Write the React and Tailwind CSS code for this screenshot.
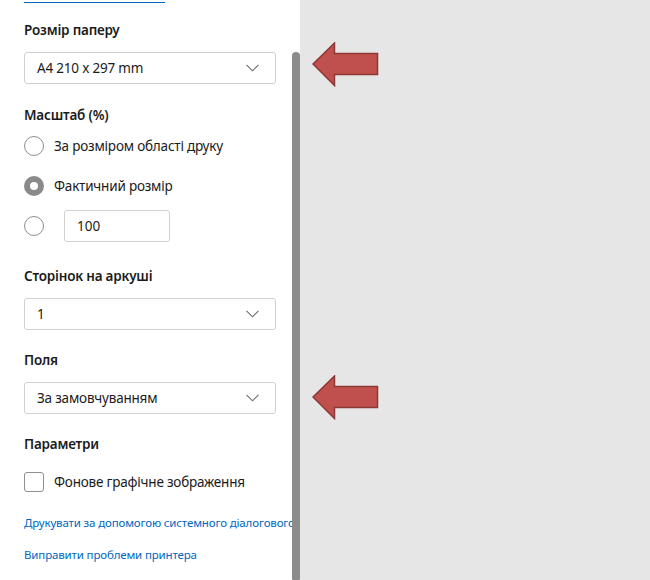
import React from 'react';

const font = { fontFamily: '"Segoe UI", "Noto Sans", "Open Sans", sans-serif' };

const Chevron = () => (
  <svg width="13" height="8" viewBox="0 0 13 8" className="shrink-0">
    <polyline points="0.5,0.8 6.5,6.8 12.5,0.8" fill="none" stroke="#6b6b6b" strokeWidth="1.1" />
  </svg>
);

const Select = ({ value, className = '' }) => (
  <div className={`w-[252px] h-8 flex items-center justify-between pl-3 pr-4 border border-[#d1d1d1] rounded-[3px] bg-white text-[13.5px] tracking-[-0.2px] text-[#1b1b1b] ${className}`}>
    <span>{value}</span>
    <Chevron />
  </div>
);

const Label = ({ children, className = '' }) => (
  <div className={`h-5 leading-5 text-[13.5px] tracking-[-0.2px] font-semibold text-[#1b1b1b] ${className}`}>{children}</div>
);

const Radio = ({ checked }) => (
  checked ? (
    <div className="w-5 h-5 rounded-full border-[6px] border-[#8a8a8a] bg-white shrink-0" />
  ) : (
    <div className="w-5 h-5 rounded-full border border-[#8f8f8f] bg-white shrink-0" />
  )
);

const Arrow = ({ className }) => (
  <svg width="67" height="45" viewBox="0 0 67 45" className={`absolute ${className}`}>
    <path
      d="M1 22 L22.5 1 L22.5 11.5 L65.5 11.5 L65.5 32.5 L22.5 32.5 L22.5 43.5 Z"
      fill="#c0504d"
      stroke="#8c3836"
      strokeWidth="1.5"
      strokeLinejoin="miter"
    />
  </svg>
);

export default function App() {
  return (
    <div className="flex w-[650px] h-[580px] overflow-hidden bg-[#e6e6e6]" style={font}>
      {/* боковая панель */}
      <div className="relative w-[300px] h-full bg-white shrink-0 overflow-hidden">
        <div className="pl-6 pr-2">
          <div className="w-[141px] h-[3px] border-b border-[#0067c0]" />

          <Label className="mt-[17px]">Розмір паперу</Label>
          <Select value="A4 210 x 297 mm" className="mt-3" />

          <Label className="mt-[21px]">Масштаб (%)</Label>
          <div className="mt-[11px] h-5 flex items-center gap-[10px] text-[13.5px] tracking-[-0.2px] text-[#1b1b1b]">
            <Radio />
            <span>За розміром області друку</span>
          </div>
          <div className="mt-5 h-5 flex items-center gap-[10px] text-[13.5px] tracking-[-0.2px] text-[#1b1b1b]">
            <Radio checked />
            <span>Фактичний розмір</span>
          </div>
          <div className="mt-[14px] h-8 flex items-center gap-5">
            <Radio />
            <div className="w-[106px] h-8 flex items-center pl-3 border border-[#d1d1d1] rounded-[3px] text-[13.5px] text-[#1b1b1b]">100</div>
          </div>

          <Label className="mt-6">Сторінок на аркуші</Label>
          <Select value="1" className="mt-3" />

          <Label className="mt-5">Поля</Label>
          <Select value="За замовчуванням" className="mt-3" />

          <Label className="mt-5">Параметри</Label>
          <div className="mt-[18px] h-5 flex items-center gap-[10px] text-[13.5px] tracking-[-0.2px] text-[#1b1b1b]">
            <div className="w-5 h-5 border border-[#8f8f8f] rounded-[3px] bg-white shrink-0" />
            <span>Фонове графічне зображення</span>
          </div>

          <div className="mt-[23px] h-4 leading-4 text-[11.5px] tracking-[-0.15px] text-[#0067c0] whitespace-nowrap">
            Друкувати за допомогою системного діалогового вікна
          </div>
          <div className="mt-4 h-4 leading-4 text-[11.5px] tracking-[-0.15px] text-[#0067c0] whitespace-nowrap">
            Виправити проблеми принтера
          </div>
        </div>

        {/* полоса прокрутки */}
        <div className="absolute right-0 top-[52px] w-2 h-[530px] rounded-full bg-[#8b8b8b]" />
      </div>

      {/* область предпросмотра */}
      <div className="relative flex-1 h-full">
        <Arrow className="left-[12px] top-[42px]" />
        <Arrow className="left-[12px] top-[375px]" />
      </div>
    </div>
  );
}
